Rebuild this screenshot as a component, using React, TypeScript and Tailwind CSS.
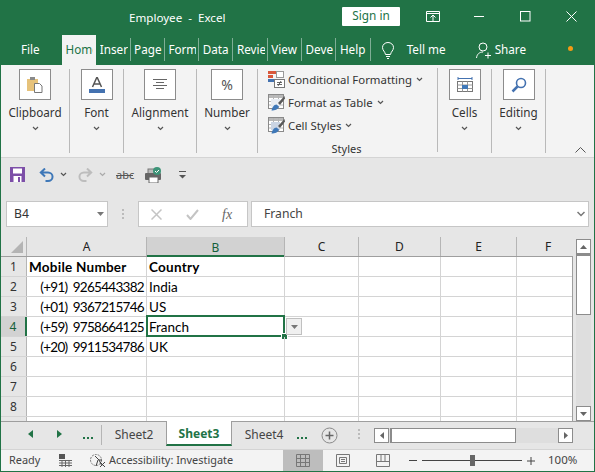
import type { ReactNode } from "react";

const UI = "font-['Noto_Sans','Open_Sans',sans-serif]";

const TABS = ["Home", "Insert", "Page Layout", "Formulas", "Data", "Review", "View", "Developer", "Help"];
const COLS = [
  { name: "A", cls: "w-[120px]" },
  { name: "B", cls: "w-[138px]" },
  { name: "C", cls: "w-[74px]" },
  { name: "D", cls: "w-[82px]" },
  { name: "E", cls: "w-[76px]" },
  { name: "F", cls: "w-[63px]" },
];
const ROWS: { a?: string; b?: string; bold?: boolean }[] = [
  { a: "Mobile Number", b: "Country", bold: true },
  { a: "(+91) 9265443382", b: "India" },
  { a: "(+01) 9367215746", b: "US" },
  { a: "(+59) 9758664125", b: "Franch" },
  { a: "(+20) 9911534786", b: "UK" },
  {},
  {},
  {},
  {},
];

function Chevron({ color = "#555" }: { color?: string }) {
  return (
    <svg width="7" height="5" viewBox="0 0 7 5" className="shrink-0">
      <path d="M1 1l2.500 2.500L6 1" fill="none" stroke={color} strokeWidth="1.200" />
    </svg>
  );
}

function RibbonGroup({ label, width, icon }: { label: string; width: string; icon: ReactNode }) {
  return (
    <div className={`${width} h-[84px] border-r border-[#b9b9b9] flex flex-col items-center shrink-0`}>
      <div className="w-[32px] h-[31px] bg-white border border-[#8c8c8c] flex items-center justify-center">{icon}</div>
      <div className="mt-[4px] text-[11.700px] leading-[17px] text-[#333]">{label}</div>
      <div className="mt-[5px] h-[5px] flex"><Chevron /></div>
    </div>
  );
}

function StyleRow({ icon, label }: { icon: ReactNode; label: string }) {
  return (
    <div className="h-[23px] flex items-center shrink-0">
      <div className="w-[17px] h-[17px] mr-[3px] shrink-0">{icon}</div>
      <span className="text-[11.400px] text-[#333] mr-[4px]">{label}</span>
      <Chevron />
    </div>
  );
}

function TableIcon({ tint }: { tint: string }) {
  return (
    <svg width="17" height="17" viewBox="0 0 17 17">
      <rect x="0.500" y="0.500" width="15" height="14" fill="#fff" stroke="#8a8a8a" />
      <rect x="1" y="1" width="14" height="3" fill="#b9b9b9" />
      <path d="M1 7.500h14M1 11h14M5.500 1v13M10.500 1v13" stroke="#b4b4b4" />
      <rect x="3" y="5" width="9" height="8" fill={tint} />
      <path d="M16.500 2l-6.500 7 2 2 5-6.500z" fill="#5a5a5a" />
      <path d="M3.500 16.500c.5-3 2.500-6 5-6l2.500 2c-1 3-4 4-7.500 4z" fill="#3f78b8" />
    </svg>
  );
}

function SheetCell({ cls, children, right, bold }: { cls: string; children?: ReactNode; right?: boolean; bold?: boolean }) {
  return (
    <div
      className={`${cls} h-full shrink-0 border-r border-[#d4d4d4] px-[2px] pt-[1px] flex items-center whitespace-pre overflow-hidden font-['Lato',sans-serif] text-[13.500px] text-black ${right ? "justify-end tracking-[-0.7px] [word-spacing:2.4px]" : ""} ${bold ? "font-bold tracking-[0.25px]" : ""}`}
    >
      {children}
    </div>
  );
}

function App() {
  return (
    <div className={`${UI} w-[595px] h-[472px] overflow-hidden bg-[#e6e6e6] border-x border-b border-[#217346] flex flex-col`}>
      {/* Title bar */}
      <div className="h-[35px] -mx-px bg-[#217346] flex items-center text-white shrink-0">
        <div className="ml-[129px] w-[213px] text-[11.600px] whitespace-pre pt-[1px]">Employee  -  Excel</div>
        <div className="w-[58px] h-[19px] bg-white text-[#217346] text-[11.800px] rounded-[1px] flex items-center justify-center -mt-[3px]">Sign in</div>
        <svg className="ml-[26px] -mt-[3px]" width="14" height="11" viewBox="0 0 14 11">
          <path d="M.5.500h13v10H.5zM.5 2.500h13M4.500 6.500L7 4l2.500 2.500M7 4v6" fill="none" stroke="#fff" />
        </svg>
        <svg className="ml-[34px] -mt-[3px]" width="11" height="11" viewBox="0 0 11 11"><path d="M0 5.500h10" stroke="#fff" /></svg>
        <svg className="ml-[35px] -mt-[3px]" width="11" height="11" viewBox="0 0 11 11"><rect x=".5" y=".5" width="9.500" height="9.500" fill="none" stroke="#fff" /></svg>
        <svg className="ml-[35px] -mt-[3px]" width="11" height="11" viewBox="0 0 11 11"><path d="M.5.500l10 10M10.500.500l-10 10" stroke="#fff" /></svg>
      </div>

      {/* Ribbon tabs */}
      <div className="h-[30px] -mx-px bg-[#217346] flex items-stretch text-white text-[11.700px] shrink-0">
        <div className="w-[62px] pl-[21px] pt-[6px]">File</div>
        {TABS.map((tab, i) => (
          <div key={tab} className={`w-[34.300px] shrink-0 relative ${i === 0 ? "bg-[#f3f3f3] text-[#217346]" : ""}`}>
            <div className="absolute left-[3.500px] right-[3px] top-[6px] overflow-hidden whitespace-nowrap">{tab}</div>
            {i > 0 && <div className="absolute right-0 top-[3px] h-[23px] w-px bg-[#7fae96]" />}
          </div>
        ))}
        <svg className="ml-[11px] mt-[7px]" width="12" height="17" viewBox="0 0 12 17">
          <path d="M3.500 12.500C3 9.500.5 8.500.5 5.500a5.500 5 0 0 1 11 0c0 3-2.500 4-3 7zM4 14.500h4M5 16.500h2" fill="none" stroke="#fff" />
        </svg>
        <div className="ml-[13px] pt-[6px] w-[69px]">Tell me</div>
        <svg className="mt-[7px]" width="16" height="17" viewBox="0 0 16 17">
          <circle cx="7" cy="5" r="4" fill="none" stroke="#fff" />
          <path d="M.5 16c.5-4 3-6 6.500-6M9 13.500h6M12 10.500v6" fill="none" stroke="#fff" />
        </svg>
        <div className="ml-[3px] pt-[6px] w-[73px]">Share</div>
        <div className="w-[5px] h-[5px] mt-[11px] rounded-full bg-[#f59a14]" />
      </div>

      {/* Ribbon */}
      <div className="h-[93px] bg-[#f3f3f3] border-b border-[#d4d4d4] flex items-start pt-[4px] shrink-0">
        <RibbonGroup
          label="Clipboard"
          width="w-[69px]"
          icon={
            <svg width="16" height="17" viewBox="0 0 16 17">
              <rect x="0" y="3" width="11" height="12" fill="#e6c27a" />
              <rect x="3" y="1" width="5" height="3" fill="#8a8a8a" />
              <path d="M7.500 7.500h5l2.500 2.500v6.500H7.500z" fill="#fff" stroke="#777" />
            </svg>
          }
        />
        <RibbonGroup
          label="Font"
          width="w-[54px]"
          icon={
            <svg width="16" height="16" viewBox="0 0 16 16">
              <path d="M3.500 10L8 0l4.500 10M5 7h6" fill="none" stroke="#555" strokeWidth="1.500" />
              <rect x="0" y="12" width="16" height="4" fill="#4472b0" />
            </svg>
          }
        />
        <RibbonGroup
          label="Alignment"
          width="w-[73px]"
          icon={
            <svg width="14" height="11" viewBox="0 0 14 11">
              <path d="M0 .5h14M3 3.500h8M0 6.500h14M3 9.500h8" stroke="#666" />
            </svg>
          }
        />
        <RibbonGroup label="Number" width="w-[61px]" icon={<span className="text-[14px] text-[#555]">%</span>} />

        {/* Styles group */}
        <div className="w-[180px] h-[84px] border-r border-[#b9b9b9] shrink-0 flex flex-col items-start pl-[10px] -mt-[1px]">
          <StyleRow
            label="Conditional Formatting"
            icon={
              <svg width="17" height="17" viewBox="0 0 17 17">
                <rect x="0" y="0" width="8" height="3" fill="#d9573a" />
                <rect x="0" y="4" width="5" height="3" fill="#d9573a" />
                <rect x="0" y="8" width="8" height="3" fill="#4472b0" />
                <rect x="8.500" y="0.500" width="7" height="6" fill="#fff" stroke="#999" />
                <rect x="6.500" y="8.500" width="10" height="8" fill="#fff" stroke="#777" />
                <path d="M9 11.500h5M9 13.500h5M10 15l3-5" stroke="#444" strokeWidth=".8" />
              </svg>
            }
          />
          <StyleRow label="Format as Table" icon={<TableIcon tint="#e9edf3" />} />
          <StyleRow label="Cell Styles" icon={<TableIcon tint="#cbd5e4" />} />
          <div className="self-stretch pr-[12px] text-center text-[11px] leading-[16px] text-[#333] mt-[4px]">Styles</div>
        </div>

        <RibbonGroup
          label="Cells"
          width="w-[54px]"
          icon={
            <svg width="16" height="17" viewBox="0 0 16 17">
              <path d="M1 1v3M15 1v3M1 2.500h14" stroke="#4472b0" />
              <rect x=".5" y="5.500" width="15" height="10" fill="#fff" stroke="#777" />
              <path d="M.5 9h15M.5 12.500h15M5.500 5.500v10M10.500 5.500v10" stroke="#999" />
              <rect x="5" y="9" width="6" height="4" fill="#3f78b8" />
            </svg>
          }
        />
        <RibbonGroup
          label="Editing"
          width="w-[54px]"
          icon={
            <svg width="16" height="16" viewBox="0 0 16 16">
              <circle cx="10" cy="6" r="4.500" fill="none" stroke="#4472b0" strokeWidth="1.600" />
              <path d="M6.500 9.500L1.500 14.500" stroke="#4472b0" strokeWidth="2.500" />
            </svg>
          }
        />
        <svg className="ml-[29px] mt-[78px]" width="11" height="6" viewBox="0 0 11 6">
          <path d="M.5 5.500l5-5 5 5" fill="none" stroke="#555" />
        </svg>
      </div>

      {/* Quick access toolbar */}
      <div className="h-[33px] flex items-center shrink-0">
        <svg className="ml-[9px]" width="15" height="15" viewBox="0 0 15 15">
          <path d="M0 0h15v15H0z" fill="#7d4fa8" />
          <rect x="3" y="1.500" width="9" height="5" fill="#fff" />
          <rect x="3.500" y="9" width="8" height="6" fill="#fff" />
          <rect x="8" y="10" width="2" height="5" fill="#7d4fa8" />
        </svg>
        <svg className="ml-[14px]" width="15" height="14" viewBox="0 0 15 14">
          <path d="M6 .5L1.800 4.500 6 8.500M2 4.500h7a4.500 4.200 0 0 1 0 8.500H6.500" fill="none" stroke="#3f78b8" strokeWidth="2" />
        </svg>
        <div className="ml-[6px] mr-[11px]"><Chevron /></div>
        <svg width="15" height="14" viewBox="0 0 15 14">
          <path d="M9 .5l4.200 4L9 8.500M13 4.500H6a4.500 4.200 0 0 0 0 8.500h2.500" fill="none" stroke="#bdbdbd" strokeWidth="2" />
        </svg>
        <div className="ml-[6px] mr-[10px]"><Chevron color="#aaa" /></div>
        <div className="w-[17px] relative text-[11px] leading-none text-[#555]">
          abc
          <div className="absolute left-0 right-0 top-[6px] h-px bg-[#555]" />
        </div>
        <svg className="ml-[12px]" width="17" height="16" viewBox="0 0 17 16">
          <rect x="3" y="2" width="7" height="5" fill="#bbb" stroke="#777" />
          <rect x="0" y="6" width="16" height="7" rx="1" fill="#666" />
          <rect x="4" y="10" width="9" height="6" fill="#fff" stroke="#666" />
          <circle cx="12" cy="4" r="4" fill="#3d9478" />
          <path d="M10 4l1.500 1.500L14 3" fill="none" stroke="#fff" />
        </svg>
        <svg className="ml-[17px]" width="7" height="8" viewBox="0 0 7 8">
          <path d="M0 .5h7" stroke="#555" />
          <path d="M0 4h7L3.500 7.500z" fill="#555" />
        </svg>
      </div>

      {/* Formula bar */}
      <div className="mt-[10px] h-[26px] flex items-stretch shrink-0">
        <div className="ml-[5px] w-[102px] bg-white border border-[#c6c6c6] flex items-center text-[12.200px] text-[#333] pl-[7px]">
          <span className="flex-1">B4</span>
          <svg className="mr-[3px]" width="7" height="4" viewBox="0 0 7 4"><path d="M0 0h7L3.500 4z" fill="#777" /></svg>
        </div>
        <div className="w-[30px] flex flex-col items-center justify-center gap-[2px]">
          <div className="w-[2px] h-[2px] bg-[#bbb]" />
          <div className="w-[2px] h-[2px] bg-[#bbb]" />
          <div className="w-[2px] h-[2px] bg-[#bbb]" />
        </div>
        <div className="w-[110px] bg-white border border-[#c6c6c6] flex items-center">
          <svg className="ml-[12px]" width="11" height="11" viewBox="0 0 11 11"><path d="M.5.500l10 10M10.500.500l-10 10" stroke="#c4c4c4" strokeWidth="1.500" /></svg>
          <svg className="ml-[24px]" width="13" height="11" viewBox="0 0 13 11"><path d="M1 6l3.500 4L12 1" fill="none" stroke="#c4c4c4" strokeWidth="2" /></svg>
          <span className="ml-[23px] font-['Liberation_Serif',serif] italic text-[14px] text-[#666]">fx</span>
        </div>
        <div className="ml-[3px] w-[338px] bg-white border border-[#c6c6c6] flex items-center text-[12.200px] text-[#444] pl-[12px]">
          <span className="flex-1">Franch</span>
          <svg className="mr-[3px]" width="8" height="6" viewBox="0 0 8 6"><path d="M.5 1L4 4.500 7.500 1" fill="none" stroke="#777" strokeWidth="1.500" /></svg>
        </div>
      </div>

      {/* Sheet and vertical scrollbar */}
      <div className="mt-[10px] h-[184px] flex shrink-0">
        <div className="w-[571px] overflow-hidden shrink-0">
          <div className="h-[20px] flex border-b border-[#9e9e9e]">
            <div className="w-[26px] shrink-0 border-r border-[#b5b5b5] flex items-end justify-end pr-[3px] pb-[3px]">
              <svg width="12" height="12" viewBox="0 0 12 12"><path d="M12 0v12H0z" fill="#b4b4b4" /></svg>
            </div>
            {COLS.map((col) => (
              <div
                key={col.name}
                className={`${col.cls} shrink-0 flex items-center justify-center text-[12px] pt-[1px] border-r ${
                  col.name === "B"
                    ? "bg-[#d2d2d2] border-[#b5b5b5] text-[#14603a] shadow-[inset_0_-2px_0_#217346] -mb-px"
                    : "border-[#b5b5b5] text-[#222]"
                }`}
              >
                {col.name}
              </div>
            ))}
          </div>
          {ROWS.map((row, i) => (
            <div key={i} className="h-[20px] flex border-b border-[#d4d4d4] bg-white">
              <div
                className={`w-[26px] shrink-0 flex items-center justify-center text-[12px] pt-[1px] border-r ${
                  i === 3
                    ? "bg-[#d2d2d2] text-[#14603a] border-[#217346] border-r-2"
                    : "bg-[#e6e6e6] text-[#333] border-[#b5b5b5]"
                }`}
              >
                {i + 1}
              </div>
              <SheetCell cls={COLS[0].cls} right={!row.bold} bold={row.bold}>{row.a}</SheetCell>
              <div className="relative">
                <SheetCell cls={COLS[1].cls} bold={row.bold}>{row.b}</SheetCell>
                {i === 3 && (
                  <>
                    {/* active cell outline, fill handle and validation dropdown */}
                    <div className="absolute -left-px -top-[2px] w-[139px] h-[22px] border-2 border-[#217346]" />
                    <div className="absolute left-[135px] top-[17px] w-[5px] h-[5px] bg-[#217346] outline outline-white" />
                    <div className="absolute left-[139px] top-[1px] w-[16px] h-[17px] bg-[#f0f0f0] border border-[#c0c0c0] flex items-center justify-center">
                      <svg width="7" height="4" viewBox="0 0 7 4"><path d="M0 0h7L3.500 4z" fill="#777" /></svg>
                    </div>
                  </>
                )}
              </div>
              {COLS.slice(2).map((col) => <SheetCell key={col.name} cls={col.cls} />)}
            </div>
          ))}
        </div>
        <div className="w-px bg-[#9e9e9e] mt-[19px] shrink-0" />
        <div className="ml-[3px] w-[15px] mt-[2px] bg-[#dedede] flex flex-col shrink-0">
          <div className="h-[15px] bg-white border border-[#8c8c8c] flex items-center justify-center">
            <svg width="7" height="4" viewBox="0 0 7 4"><path d="M3.500 0L7 4H0z" fill="#666" /></svg>
          </div>
          <div className="h-[61px] bg-white border border-[#8c8c8c] border-t-2" />
          <div className="flex-1" />
          <div className="h-[15px] bg-white border border-[#8c8c8c] flex items-center justify-center">
            <svg width="7" height="4" viewBox="0 0 7 4"><path d="M0 0h7L3.500 4z" fill="#666" /></svg>
          </div>
        </div>
      </div>

      {/* Sheet tabs */}
      <div className="h-[28px] border-t border-[#9e9e9e] flex items-start shrink-0 text-[12px]">
        <svg className="ml-[27px] mt-[8px]" width="5" height="8" viewBox="0 0 5 8"><path d="M5 0v8L0 4z" fill="#217346" /></svg>
        <svg className="ml-[24px] mt-[8px]" width="5" height="8" viewBox="0 0 5 8"><path d="M0 0v8l5-4z" fill="#217346" /></svg>
        <div className="ml-[21px] mt-[15px] flex gap-[2px]">
          <div className="w-[2px] h-[2px] bg-[#217346]" />
          <div className="w-[2px] h-[2px] bg-[#217346]" />
          <div className="w-[2px] h-[2px] bg-[#217346]" />
        </div>
        <div className="ml-[8px] mt-[3px] w-px h-[20px] bg-[#b5b5b5]" />
        <div className="w-[64px] h-[24px] pt-[2px] flex items-center justify-center text-[#444] shrink-0">Sheet2</div>
        <div className="w-[66px] h-[25px] -mt-px pt-[2px] bg-white border-x border-[#9e9e9e] border-b-2 border-b-[#217346] flex items-center justify-center font-bold text-[#217346] shrink-0">Sheet3</div>
        <div className="w-[64px] h-[24px] pt-[2px] flex items-center justify-center text-[#444] shrink-0">Sheet4</div>
        <div className="ml-[1px] mt-[15px] flex gap-[2px]">
          <div className="w-[2px] h-[2px] bg-[#217346]" />
          <div className="w-[2px] h-[2px] bg-[#217346]" />
          <div className="w-[2px] h-[2px] bg-[#217346]" />
        </div>
        <svg className="ml-[14px] mt-[5px]" width="17" height="17" viewBox="0 0 17 17">
          <circle cx="8.500" cy="8.500" r="7.500" fill="none" stroke="#8a8a8a" />
          <path d="M8.500 4.500v8M4.500 8.500h8" stroke="#666" strokeWidth="1.500" />
        </svg>
        <div className="ml-[20px] mt-[7px] flex flex-col gap-[2px]">
          <div className="w-[2px] h-[2px] bg-[#bbb]" />
          <div className="w-[2px] h-[2px] bg-[#bbb]" />
          <div className="w-[2px] h-[2px] bg-[#bbb]" />
        </div>
        <div className="ml-[14px] mt-[6px] w-[199px] h-[15px] bg-[#dedede] flex">
          <div className="w-[15px] bg-white border border-[#8c8c8c] flex items-center justify-center">
            <svg width="4" height="7" viewBox="0 0 4 7"><path d="M4 0v7L0 3.500z" fill="#666" /></svg>
          </div>
          <div className="ml-[1px] w-[126px] bg-white border border-[#8c8c8c] border-l-2" />
          <div className="flex-1" />
          <div className="w-[15px] bg-white border border-[#8c8c8c] flex items-center justify-center">
            <svg width="4" height="7" viewBox="0 0 4 7"><path d="M0 0v7l4-3.500z" fill="#666" /></svg>
          </div>
        </div>
      </div>

      {/* Status bar */}
      <div className="flex-1 bg-[#f3f3f3] border-t border-[#d4d4d4] flex items-center text-[10.900px] text-[#444]">
        <span className="ml-[8px] w-[50px] -mt-[1px]">Ready</span>
        <svg width="13" height="13" viewBox="0 0 13 13">
          <rect x="0" y="0" width="6" height="5" fill="#555" />
          <path d="M0 6.500h13M0 9h13M0 11.500h13M3 6v7M6.500 6v7M10 6v7" stroke="#666" />
        </svg>
        <svg className="ml-[18px]" width="17" height="15" viewBox="0 0 17 15">
          <circle cx="6" cy="7" r="5.500" fill="none" stroke="#777" strokeDasharray="2 1" />
          <path d="M5 3l4 4h3M8 7l-2 6M9 7l3 6M10 9l5 5M15 9l-5 5" fill="none" stroke="#444" />
        </svg>
        <span className="ml-[2px] w-[174px] whitespace-nowrap -mt-[1px]">Accessibility: Investigate</span>
        <div className="w-[40px] h-full bg-[#bdbdbd] flex items-center justify-center">
          <svg width="14" height="13" viewBox="0 0 14 13"><path d="M.5.500h13v12H.5zM.5 4.500h13M.5 8.500h13M4.500.5v12M9.500.5v12" fill="none" stroke="#777" /></svg>
        </div>
        <svg className="ml-[13px]" width="14" height="13" viewBox="0 0 14 13"><path d="M.5.500h13v12H.5zM3.500 3.500h7v6h-7zM5 5.500h4M5 7.500h4" fill="none" stroke="#777" /></svg>
        <svg className="ml-[26px]" width="14" height="13" viewBox="0 0 14 13"><path d="M.5.500h13v12H.5zM.5 7.500h13M5 .5v7M9 .5v7" fill="none" stroke="#777" /></svg>
        <div className="ml-[19px] w-[8px] h-px bg-[#444]" />
        <div className="ml-[5px] w-[100px] h-px bg-[#444] relative">
          <div className="absolute left-[48px] -top-[5px] w-[5px] h-[11px] bg-[#666]" />
        </div>
        <svg className="ml-[5px]" width="8" height="8" viewBox="0 0 8 8"><path d="M4 0v8M0 4h8" stroke="#444" /></svg>
        <span className="ml-[13px] -mt-[1px] text-[11.500px]">100%</span>
      </div>
    </div>
  );
}

export default App;
